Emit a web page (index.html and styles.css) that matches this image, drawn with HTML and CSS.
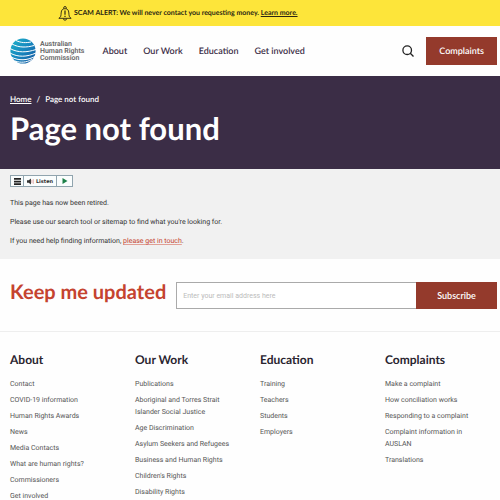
FILE: index.html
```
<!DOCTYPE html>
<html lang="en">
<head>
  <meta charset="UTF-8" />
  <meta name="viewport" content="width=device-width, initial-scale=1" />
  <title>Page not found | Australian Human Rights Commission</title>
  <link rel="stylesheet" href="styles.css">
</head>
<body>
  <div class="alert">
    <svg class="alert-icon" viewBox="0 0 26 28" fill="none" stroke="#2b2513" stroke-width="1.7">
      <path d="M10.500 5V3.500a2.500 2.500 0 0 1 5 0V5M1.500 23c4-2 4-5 4.300-10C6.100 7 9 5 13 5s6.900 2 7.200 8c.3 5 .3 8 4.300 10zM10 23.500a3 3 0 0 0 6 0" />
      <path d="M13 8.500v8M13 18v2.500" stroke-width="2.200" />
    </svg>
    <p>SCAM ALERT: We will never contact you requesting money. <a href="#">Learn more.</a></p>
  </div>

  <header class="header">
    <a class="logo" href="#">
      <svg class="logo-globe" viewBox="0 0 26 26">
        <defs>
          <linearGradient id="globe" x1="0" y1="0" x2="1" y2="1">
            <stop offset="0" stop-color="#20b5c9" />
            <stop offset=".5" stop-color="#1687bf" />
            <stop offset="1" stop-color="#16539c" />
          </linearGradient>
        </defs>
        <circle cx="13" cy="13" r="12.600" fill="url(#globe)" />
        <g fill="none" stroke="#fff" stroke-width="1">
          <path d="M6 2.500c5 2.500 10 2.500 15 1.500" />
          <path d="M2 6c7 4 15 3.500 22 1.500" />
          <path d="M0 10.500c8 4.500 17 4 26 1" />
          <path d="M0 15c8 4.500 17 4 26 0" />
          <path d="M1 19c8 4 16 3.500 24-.5" />
          <path d="M5 23c6 2 11 1.500 17-1.500" />
        </g>
      </svg>
      <span>Australian<br>Human Rights<br>Commission</span>
    </a>
    <nav class="nav-links">
      <a href="#">About</a>
      <a href="#">Our Work</a>
      <a href="#">Education</a>
      <a href="#">Get involved</a>
    </nav>
    <button class="search-btn" type="button" aria-label="Search">
      <svg viewBox="0 0 12 12" fill="none" stroke="#222" stroke-width="1.300">
        <circle cx="5.200" cy="5.200" r="4.300" />
        <path d="M8.300 8.300l3.200 3.200" />
      </svg>
    </button>
    <a class="btn complaints-btn" href="#">Complaints</a>
  </header>

  <section class="banner">
    <nav class="breadcrumb">
      <a href="#">Home</a>
      <span>/</span>
      <span>Page not found</span>
    </nav>
    <h1>Page not found</h1>
  </section>

  <main class="content">
    <div class="listen">
      <button type="button" aria-label="Menu">
        <svg class="menu-icon" viewBox="0 0 8 8"><path d="M0 1h8M0 4h8M0 7h8" stroke="#222" stroke-width="2" /></svg>
      </button>
      <button class="listen-btn" type="button">
        <svg class="sound-icon" viewBox="0 0 8 8">
          <path d="M0 2.500h2L4.500.5v7L2 5.500H0z" fill="#333" />
          <path d="M5.500 2.200v3.600M7.200 1.200v5.600" stroke="#dc9a96" stroke-width=".8" />
        </svg>
        Listen
      </button>
      <button class="play-btn" type="button" aria-label="Play">
        <svg class="play-icon" viewBox="0 0 6 6"><path d="M.5 0L5.500 3 .5 6z" fill="#1d8048" /></svg>
      </button>
    </div>
    <p>This page has now been retired.</p>
    <p>Please use our search tool or sitemap to find what you're looking for.</p>
    <p>If you need help finding information, <a href="#">please get in touch</a>.</p>
  </main>

  <section class="subscribe">
    <h2>Keep me updated</h2>
    <form class="subscribe-form">
      <input type="email" aria-label="Email address" placeholder="Enter your email address here" />
      <button class="btn" type="submit">Subscribe</button>
    </form>
  </section>

  <footer class="footer">
    <div class="footer-col">
      <h3>About</h3>
      <ul>
        <li><a href="#">Contact</a></li>
        <li><a href="#">COVID-19 information</a></li>
        <li><a href="#">Human Rights Awards</a></li>
        <li><a href="#">News</a></li>
        <li><a href="#">Media Contacts</a></li>
        <li><a href="#">What are human rights?</a></li>
        <li><a href="#">Commissioners</a></li>
        <li><a href="#">Get involved</a></li>
      </ul>
    </div>
    <div class="footer-col">
      <h3>Our Work</h3>
      <ul>
        <li><a href="#">Publications</a></li>
        <li><a href="#">Aboriginal and Torres Strait Islander Social Justice</a></li>
        <li><a href="#">Age Discrimination</a></li>
        <li><a href="#">Asylum Seekers and Refugees</a></li>
        <li><a href="#">Business and Human Rights</a></li>
        <li><a href="#">Children's Rights</a></li>
        <li><a href="#">Disability Rights</a></li>
      </ul>
    </div>
    <div class="footer-col">
      <h3>Education</h3>
      <ul>
        <li><a href="#">Training</a></li>
        <li><a href="#">Teachers</a></li>
        <li><a href="#">Students</a></li>
        <li><a href="#">Employers</a></li>
      </ul>
    </div>
    <div class="footer-col">
      <h3>Complaints</h3>
      <ul>
        <li><a href="#">Make a complaint</a></li>
        <li><a href="#">How conciliation works</a></li>
        <li><a href="#">Responding to a complaint</a></li>
        <li><a href="#">Complaint information in AUSLAN</a></li>
        <li><a href="#">Translations</a></li>
      </ul>
    </div>
  </footer>
</body>
</html>
```
FILE: styles.css
```
* {
  box-sizing: border-box;
}
body {
  margin: 0;
  font-family: Roboto, Arial, sans-serif;
  font-size: 7px;
  line-height: 12px;
  color: #333;
  background: #fefefe;
  text-rendering: geometricPrecision;
}
h1, h2, h3, p, ul {
  margin: 0;
  padding: 0;
}
h1, h2, h3, .alert, .nav-links, .btn, .breadcrumb {
  font-family: Lato, sans-serif;
}
button {
  border: 0;
  padding: 0;
  cursor: pointer;
}

.alert {
  display: flex;
  align-items: center;
  gap: 2px;
  height: 26px;
  padding-left: 58px;
  background: #fde53a;
  color: #2b2513;
  font-weight: 700;
}
.alert-icon {
  width: 14px;
  height: 15px;
}
.alert a {
  color: inherit;
}

.header {
  display: flex;
  align-items: center;
  height: 50px;
  padding: 0 3px 0 10px;
}
.logo {
  display: flex;
  align-items: center;
  gap: 4px;
  color: #666;
  font-weight: 600;
  line-height: 7px;
  text-decoration: none;
}
.logo-globe {
  width: 26px;
  height: 26px;
}
.nav-links {
  display: flex;
  gap: 16px;
  margin-left: 18px;
}
.nav-links a {
  color: #3b2d46;
  font-size: 9px;
  font-weight: 600;
  text-decoration: none;
}
.search-btn {
  width: 12px;
  height: 12px;
  margin-left: auto;
  background: none;
}
.search-btn svg {
  display: block;
}
.btn {
  background: #943a2c;
  color: #fff;
  font-size: 9px;
  font-weight: 600;
  text-align: center;
  text-decoration: none;
}
.complaints-btn {
  margin-left: 12px;
  padding: 8px 13px;
}

.banner {
  padding: 17px 10px 18px;
  background: #3b2d46;
  color: #fff;
}
.breadcrumb {
  display: flex;
  gap: 5px;
  font-size: 8px;
  font-weight: 600;
}
.breadcrumb a {
  color: inherit;
}
h1 {
  font-size: 31px;
  line-height: 46px;
}

.content {
  padding: 6px 10px 12px;
  background: #f1f1f1;
}
.content p {
  margin-top: 7px;
}
.content a {
  color: #c5432f;
  text-decoration-color: #e0a096;
}
.listen {
  display: flex;
  width: max-content;
  height: 12px;
  margin-bottom: 10px;
  border: 1px solid #90a4ae;
}
.listen button {
  display: flex;
  align-items: center;
  justify-content: center;
  gap: 2px;
  width: 12px;
  background: #fafdfd;
  color: #333;
  font-family: "DejaVu Sans", sans-serif;
  font-size: 5px;
  font-weight: 700;
}
.listen .listen-btn {
  width: 34px;
  border: solid #90a4ae;
  border-width: 0 1px;
}
.listen .play-btn {
  width: 15px;
}
.menu-icon, .sound-icon {
  width: 7px;
  height: 7px;
}
.play-icon {
  width: 6px;
  height: 6px;
}

.subscribe {
  display: flex;
  align-items: flex-start;
  gap: 10px;
  padding: 23px 3px 22px 10px;
  border-bottom: 1px solid #eee;
}
h2 {
  color: #c5432f;
  font-size: 20px;
  line-height: 20px;
  white-space: nowrap;
}
.subscribe-form {
  display: flex;
  flex: 1;
  height: 27px;
}
.subscribe-form input {
  flex: 1;
  min-width: 0;
  padding: 0 6px;
  border: 1px solid #aaa;
  border-right: 0;
  border-radius: 0;
  background: #fff;
  font: inherit;
}
.subscribe-form input::placeholder {
  color: #bbb;
}
.subscribe-form .btn {
  width: 81px;
}

.footer {
  display: grid;
  grid-template-columns: repeat(4, 1fr);
  padding-top: 20px;
}
.footer-col {
  padding: 0 15px 0 10px;
}
h3 {
  margin-bottom: 10px;
  color: #2a2530;
  font-size: 12px;
  line-height: 16px;
}
ul {
  list-style: none;
}
li {
  margin-bottom: 4px;
}
li a {
  color: #555;
  text-decoration: none;
}
```
